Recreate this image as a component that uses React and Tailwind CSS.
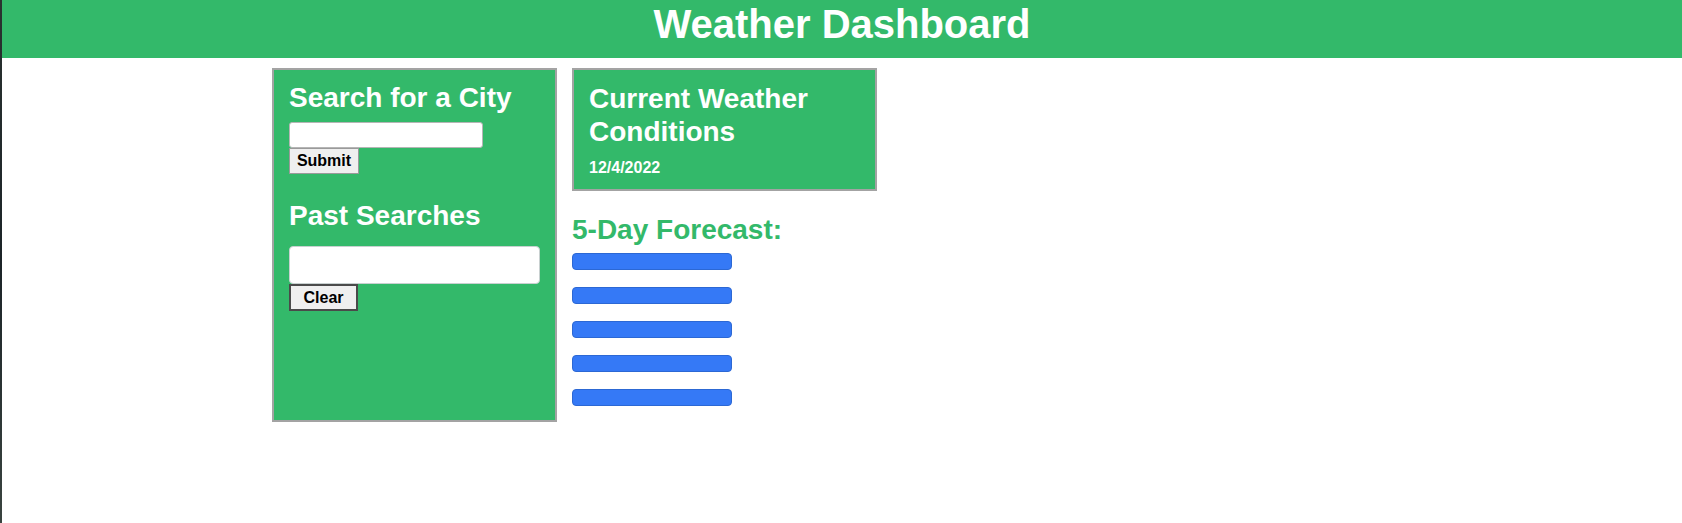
export default function App() {
  const font = { fontFamily: '"Liberation Sans", Arial, sans-serif' };
  return (
    <div className="flex min-h-[523px] bg-white" style={font}>
      <div className="w-[2px] shrink-0 bg-gradient-to-b from-[#2a3230] via-[#1c2428] to-[#3a4440]" />
      <div className="flex-1 flex flex-col">
        <header className="h-[58px] bg-[#33b96a] flex justify-center pt-px">
          <h1 className="text-[40px] leading-[46px] font-bold text-white">Weather Dashboard</h1>
        </header>
        <main className="flex items-start gap-[15px] pl-[270px] pt-[10px]">
          <section className="w-[285px] h-[354px] border-2 border-[#a3a3a3] bg-[#33b96a] px-[15px] pt-[12px] flex flex-col items-start">
            <h2 className="text-[28px] leading-[32px] font-bold text-white">Search for a City</h2>
            <input type="text" className="mt-[8px] w-[194px] h-[26px] bg-white border border-[#b5b5b5] rounded-[3px]" />
            <button className="w-[70px] h-[26px] bg-[#efefef] border border-[#9a9a9a] text-[16px] font-bold text-black leading-none">Submit</button>
            <h2 className="mt-[26px] text-[28px] leading-[32px] font-bold text-white">Past Searches</h2>
            <div className="mt-[14px] w-full h-[38px] bg-white border border-[#c8d0d0] rounded-[4px]" />
            <button className="w-[69px] h-[27px] bg-[#efefef] border-2 border-[#4a4a4a] text-[16px] font-bold text-black leading-none">Clear</button>
          </section>
          <div className="flex flex-col items-start">
            <section className="w-[305px] h-[123px] border-2 border-[#a3a3a3] bg-[#33b96a] px-[15px] pt-[12px]">
              <h2 className="text-[28px] leading-[33px] font-bold text-white">Current Weather Conditions</h2>
              <p className="mt-[11px] text-[16px] leading-[18px] font-bold text-white">12/4/2022</p>
            </section>
            <h2 className="mt-[23px] text-[28px] leading-[32px] font-bold text-[#33b96a]">5-Day Forecast:</h2>
            <div className="mt-[7px] flex flex-col gap-[17px]">
              {[0, 1, 2, 3, 4].map((i) => (
                <div key={i} className="w-[160px] h-[17px] bg-[#3579f6] border border-[#2c68d4] rounded-[4px]" />
              ))}
            </div>
          </div>
        </main>
      </div>
    </div>
  );
}
